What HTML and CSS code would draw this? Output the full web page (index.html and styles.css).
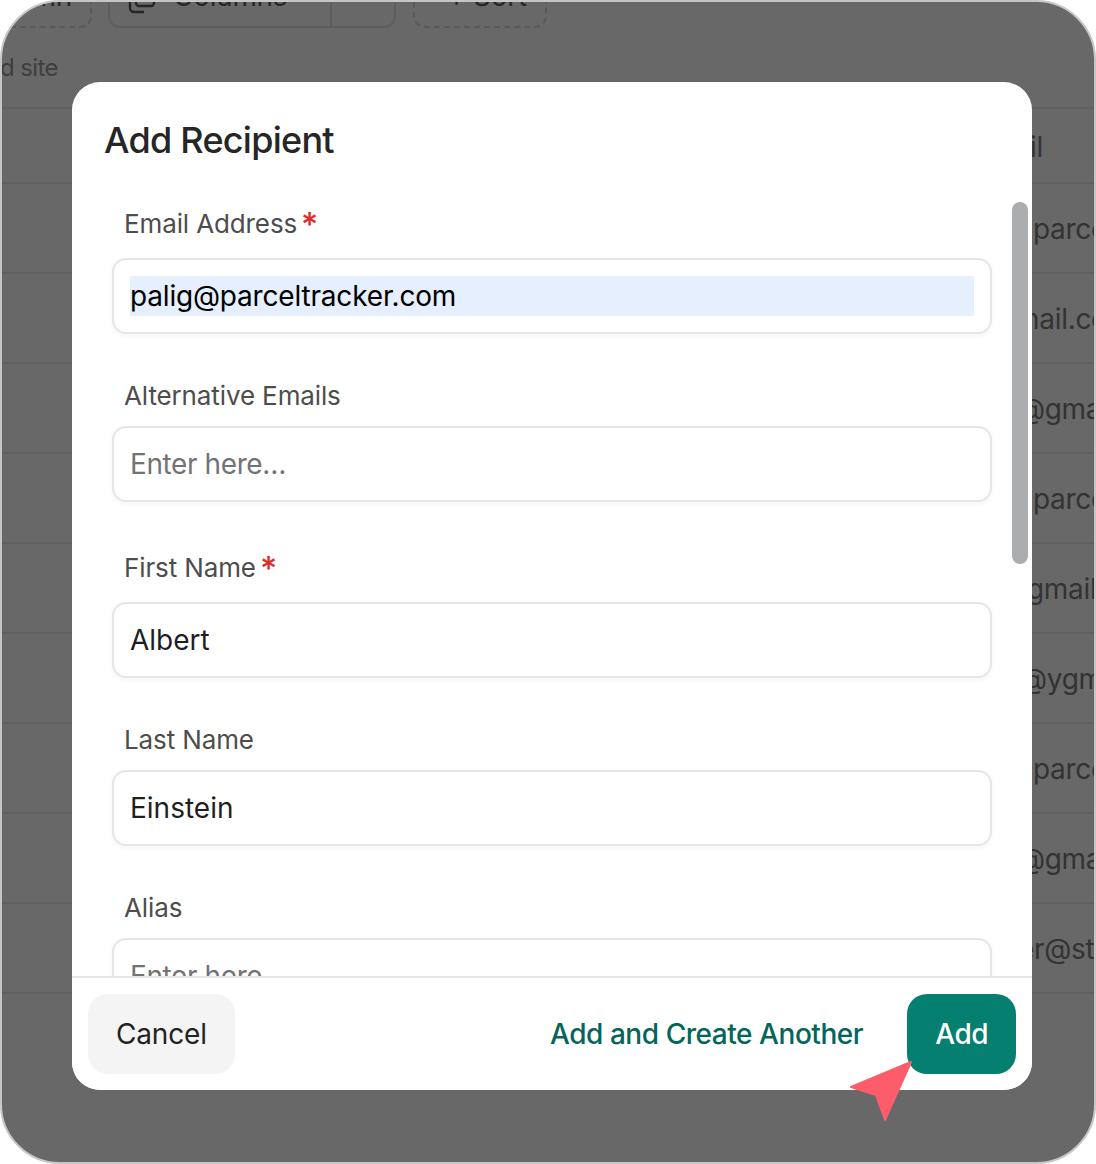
FILE: index.html
```html
<!DOCTYPE html>
<html lang="en">
  <head>
    <meta charset="UTF-8" />
    <title>Add Recipient</title>
    <link rel="stylesheet" href="styles.css">
  </head>
  <body>
    <div class="screen">
      <div class="page">
        <div class="toolbar">
          <div class="tool dashed tool-first"><span>Column</span></div>
          <div class="tool-group">
            <div class="tool-main">
              <svg class="tool-icon" width="28" height="28" viewBox="0 0 28 28" fill="none" stroke="#262626" stroke-width="2.4"><rect x="8" y="4" width="18" height="14" rx="3"/><path d="M2 8v12a4 4 0 0 0 4 4h10"/></svg>
              <span>Columns</span>
            </div>
            <div class="tool-side"><span>↑↓</span></div>
          </div>
          <div class="tool dashed tool-sort"><span>+ Sort</span></div>
        </div>
        <div class="subtitle">d site</div>
        <div class="row row-head">il</div>
        <div class="row">parce</div>
        <div class="row row-mail">nail.co</div>
        <div class="row row-at">@gmai</div>
        <div class="row">parce</div>
        <div class="row row-g">gmail</div>
        <div class="row row-yg">@ygm</div>
        <div class="row">parce</div>
        <div class="row row-at">@gmai</div>
        <div class="row row-at">er@st</div>
      </div>

      <div class="modal">
        <h2 class="modal-title">Add Recipient</h2>
        <div class="modal-body">
          <div class="field">
            <label class="field-label field-label-req">Email Address<span class="req">*</span></label>
            <div class="input"><span class="selected">palig@parceltracker.com</span></div>
          </div>
          <div class="field">
            <label class="field-label">Alternative Emails</label>
            <div class="input placeholder">Enter here…</div>
          </div>
          <div class="field">
            <label class="field-label field-label-req">First Name<span class="req">*</span></label>
            <div class="input">Albert</div>
          </div>
          <div class="field">
            <label class="field-label">Last Name</label>
            <div class="input">Einstein</div>
          </div>
          <div class="field">
            <label class="field-label">Alias</label>
            <div class="input placeholder">Enter here…</div>
          </div>
          <div class="scroll-thumb"></div>
        </div>
        <div class="modal-footer">
          <button class="btn btn-cancel">Cancel</button>
          <div class="footer-right">
            <button class="btn btn-link">Add and Create Another</button>
            <button class="btn btn-add">Add</button>
          </div>
        </div>
      </div>

      <svg class="cursor" width="66" height="62" viewBox="0 0 66 62"><path d="M62 2 2 27 27 35 36 60Z" fill="#fd5c6b" stroke="#fd5c6b" stroke-width="2" stroke-linejoin="round"/></svg>
    </div>
  </body>
</html>
```

FILE: styles.css
```css
* {
  box-sizing: border-box;
}
html, body {
  margin: 0;
  background: #fff;
}
body {
  font-family: Inter, Arial, sans-serif;
  width: 1096px;
  height: 1164px;
  overflow: hidden;
}
.screen {
  position: relative;
  width: 1096px;
  height: 1164px;
  background: #686868;
  border: 2px solid #c6c6c6;
  border-radius: 60px;
  overflow: hidden;
}
.page {
  color: #333;
  font-size: 28px;
  letter-spacing: -0.3px;
}
.toolbar {
  display: flex;
  align-items: flex-end;
  gap: 16px;
  height: 26px;
  margin-left: -2px;
  color: #262626;
  line-height: 34px;
}
.tool {
  display: flex;
  align-items: flex-end;
  height: 56px;
  padding-bottom: 13px;
  border-radius: 12px;
  flex-shrink: 0;
}
.dashed {
  border: 2px dashed #5a5a5a;
}
.tool-first {
  width: 92px;
  justify-content: flex-end;
  padding-right: 18px;
}
.tool-group {
  display: flex;
  flex-shrink: 0;
  width: 288px;
  height: 56px;
  border: 2px solid #5e5e5e;
  border-radius: 12px;
}
.tool-main {
  display: flex;
  align-items: flex-end;
  gap: 17px;
  width: 222px;
  padding: 0 0 13px 18px;
  border-right: 2px solid #5e5e5e;
}
.tool-icon {
  margin-bottom: -3px;
  flex-shrink: 0;
}
.tool-side {
  display: flex;
  align-items: flex-end;
  justify-content: center;
  flex: 1;
  padding-bottom: 15px;
  font-size: 22px;
}
.tool-sort {
  width: 134px;
  margin-left: 1px;
  justify-content: center;
  padding-left: 14px;
}
.subtitle {
  display: flex;
  align-items: center;
  height: 81px;
  margin-left: -2px;
  font-size: 24px;
  letter-spacing: -0.6px;
  color: #3f3f3f;
  border-bottom: 2px solid #606060;
}
.row {
  display: flex;
  align-items: center;
  height: 90px;
  padding: 2px 0 0 1031px;
  border-bottom: 2px solid #606060;
  white-space: nowrap;
}
.row-head {
  height: 75px;
  padding-left: 1028px;
}
.row-mail {
  padding-left: 1021px;
}
.row-at {
  padding-left: 1016px;
}
.row-yg {
  padding-left: 1018px;
}
.row-g {
  padding-left: 1025px;
}
.modal {
  position: absolute;
  left: 70px;
  top: 80px;
  width: 960px;
  height: 1008px;
  background: #fff;
  border-radius: 28px;
  display: flex;
  flex-direction: column;
  overflow: hidden;
}
.modal-title {
  flex-shrink: 0;
  margin: 0;
  padding: 36px 32px 0;
  height: 112px;
  font-size: 36px;
  line-height: 44px;
  font-weight: 500;
  color: #262626;
  letter-spacing: -0.75px;
}
.modal-body {
  position: relative;
  flex: 1;
  overflow: hidden;
  padding: 4px 40px 0;
  display: flex;
  flex-direction: column;
}
.field {
  flex-shrink: 0;
  margin-bottom: 40px;
}
.field-label {
  display: flex;
  height: 52px;
  padding: 6px 12px 0;
  font-size: 26px;
  line-height: 32px;
  color: #4d4d4d;
  letter-spacing: -0.12px;
}
.field-label-req {
  height: 60px;
  padding-top: 10px;
}
.req {
  color: #e02b2b;
  margin-left: 4px;
  font-size: 33px;
  line-height: 32px;
  font-weight: 500;
}
.input {
  height: 76px;
  padding: 16px;
  border: 2px solid #e6e6e6;
  border-radius: 14px;
  font-size: 28px;
  line-height: 40px;
  color: #1f1f1f;
  box-shadow: 0 2px 6px rgba(0, 0, 0, 0.04);
}
.selected {
  display: block;
  background: #e5effd;
  color: #000;
  letter-spacing: -0.18px;
}
.placeholder {
  color: #737373;
  letter-spacing: -0.4px;
}
.scroll-thumb {
  position: absolute;
  right: 4px;
  top: 8px;
  width: 16px;
  height: 362px;
  background: #acadaf;
  border-radius: 8px;
}
.modal-footer {
  flex-shrink: 0;
  display: flex;
  justify-content: space-between;
  height: 114px;
  padding: 16px;
  background: #fff;
  border-top: 2px solid #e6e6e6;
}
.footer-right {
  display: flex;
  gap: 16px;
}
.btn {
  height: 80px;
  border: none;
  border-radius: 20px;
  font-family: inherit;
  font-size: 28px;
  padding: 0 28px;
  letter-spacing: -0.18px;
}
.btn-cancel {
  background: #f4f4f4;
  color: #222;
}
.btn-link {
  background: none;
  color: #04655a;
  font-weight: 500;
  letter-spacing: -0.45px;
}
.btn-add {
  background: #047f70;
  color: #fff;
  font-weight: 500;
  letter-spacing: -0.5px;
}
.cursor {
  position: absolute;
  left: 847px;
  top: 1058px;
}
```
